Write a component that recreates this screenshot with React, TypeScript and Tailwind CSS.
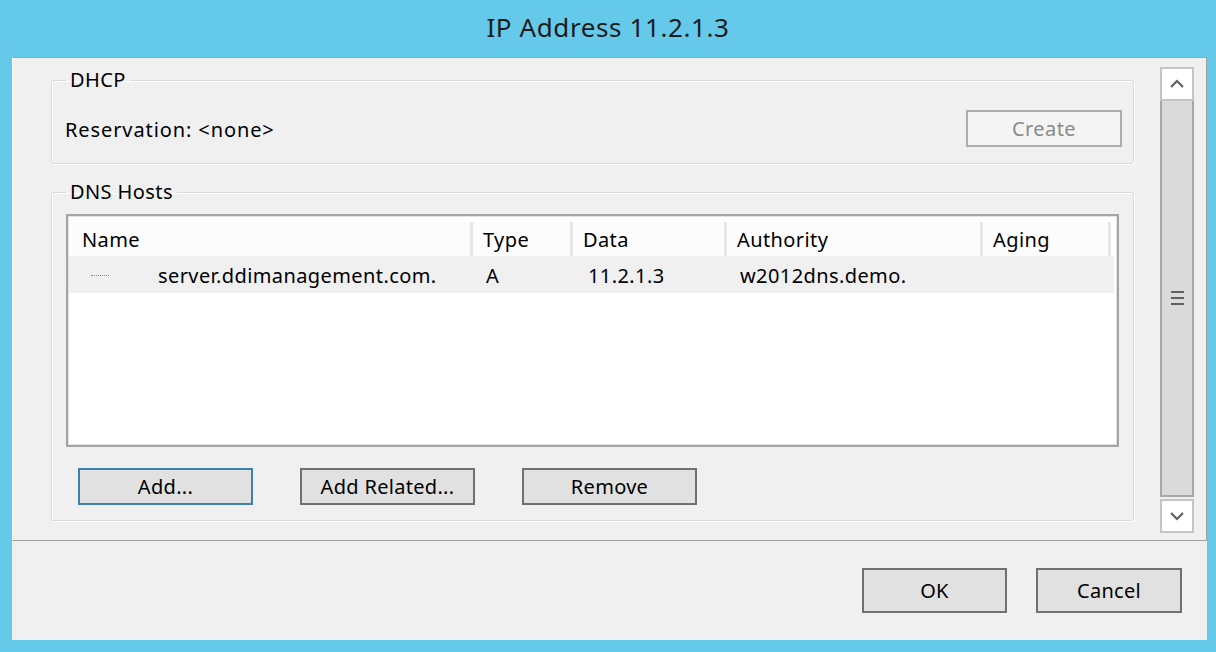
import React from 'react';

const font = { fontFamily: '"Noto Sans", "Open Sans", Arial, sans-serif' };

const columns = [
  { label: 'Name', width: 'w-[401px]' },
  { label: 'Type', width: 'w-[100px]' },
  { label: 'Data', width: 'w-[154px]' },
  { label: 'Authority', width: 'w-[256px]' },
  { label: 'Aging', width: 'w-[128px]' },
];

const WinButton: React.FC<{ label: string; focused?: boolean; className?: string }> = ({
  label,
  focused = false,
  className = '',
}) => (
  <button
    className={
      'flex items-center justify-center pt-[1px] bg-[#e1e1e1] border-2 text-[20px] tracking-[0.3px] text-black ' +
      (focused ? 'border-[#3c7fb1] ' : 'border-[#707070] ') +
      className
    }
  >
    {label}
  </button>
);

const Chevron: React.FC<{ down?: boolean }> = ({ down = false }) => (
  <svg width="16" height="10" viewBox="0 0 16 10" className={down ? 'rotate-180' : ''}>
    <path d="M2 8 L8 2 L14 8" fill="none" stroke="#606060" strokeWidth="2.2" />
  </svg>
);

export default function App() {
  return (
    <div className="w-[1216px] h-[652px] bg-[#65c9ea] flex flex-col overflow-hidden" style={font}>
      {/* Title bar */}
      <div className="h-[57px] shrink-0 flex items-center justify-center text-[26px] tracking-[0.6px] text-[#1b1b1b] pb-[3px]">
        IP Address 11.2.1.3
      </div>

      {/* Window body */}
      <div className="ml-[12px] mr-[9px] mb-[12px] flex-1 bg-[#f0f0f0] flex flex-col">
        {/* Scrollable panel */}
        <div className="h-[484px] shrink-0 flex border-t border-r border-b border-t-[#8fa9b5] border-r-[#a0a0a0] border-b-[#a0a0a0] border-l border-l-white">
          <div className="flex-1 pl-[38px] pt-[10px] flex flex-col gap-[16px] text-[20px] tracking-[0.4px] text-black">
            {/* DHCP */}
            <fieldset className="w-[1083px] border border-[#d5dde3] rounded-[3px] shadow-[inset_1px_1px_0_#fff,1px_1px_0_#fff] pl-[14px] pr-[11px] pb-[16px]">
              <legend className="px-[4px] leading-[24px]">DHCP</legend>
              <div className="mt-[18px] h-[37px] flex items-center justify-between">
                <span className="-ml-[1px] pt-[3px] tracking-[0.9px]">Reservation: &lt;none&gt;</span>
                <button className="w-[156px] h-[37px] flex items-center justify-center pt-[1px] bg-[#f4f4f4] border-2 border-[#adadad] text-[#8a8a8a]">
                  Create
                </button>
              </div>
            </fieldset>

            {/* DNS Hosts */}
            <fieldset className="w-[1083px] border border-[#d5dde3] rounded-[3px] shadow-[inset_1px_1px_0_#fff,1px_1px_0_#fff] pl-[14px] pr-[14px] pb-[15px]">
              <legend className="px-[4px] leading-[24px]">DNS Hosts</legend>
              <div className="mt-[10px] h-[233px] border-2 border-[#a4a4a4] bg-white">
                <div className="h-full border border-[#e3e3e3] pt-[5px] pr-[2px]">
                  {/* Header */}
                  <div className="flex h-[34px] ml-[3px]">
                    {columns.map((c) => (
                      <div
                        key={c.label}
                        className={c.width + ' h-full flex items-center pl-[10px] pt-[2px] bg-[#fcfcfc] border-r-[3px] border-[#e6e6e6]'}
                      >
                        {c.label}
                      </div>
                    ))}
                  </div>
                  {/* Row */}
                  <div className="flex h-[37px] items-center pt-[2px] bg-[#f0f0f0]">
                    <div className="w-[404px] flex items-center">
                      <span className="ml-[22px] w-[18px] border-t border-dotted border-[#8a8a8a]" />
                      <span className="ml-[49px]">server.ddimanagement.com.</span>
                    </div>
                    <div className="w-[100px] pl-[13px]">A</div>
                    <div className="w-[154px] pl-[15px]">11.2.1.3</div>
                    <div className="w-[256px] pl-[13px]">w2012dns.demo.</div>
                    <div className="flex-1" />
                  </div>
                </div>
              </div>
              <div className="mt-[21px] ml-[12px] flex gap-[47px]">
                <WinButton label="Add..." focused className="w-[175px] h-[37px]" />
                <WinButton label="Add Related..." className="w-[175px] h-[37px]" />
                <WinButton label="Remove" className="w-[175px] h-[37px]" />
              </div>
            </fieldset>
          </div>

          {/* Scrollbar */}
          <div className="w-[34px] mt-[9px] mb-[7px] mr-[12px] flex flex-col">
            <div className="h-[34px] shrink-0 bg-white border-2 border-[#c4c4c4] flex items-center justify-center">
              <Chevron />
            </div>
            <div className="flex-1 bg-[#dadada] border-2 border-t-0 border-[#a8a8a8] flex flex-col items-center justify-center gap-[4px] mb-[2px]">
              <span className="w-[13px] h-[2px] bg-[#606060]" />
              <span className="w-[13px] h-[2px] bg-[#606060]" />
              <span className="w-[13px] h-[2px] bg-[#606060]" />
            </div>
            <div className="h-[34px] shrink-0 bg-white border-2 border-[#c4c4c4] flex items-center justify-center">
              <Chevron down />
            </div>
          </div>
        </div>

        {/* Footer */}
        <div className="flex-1 flex items-center justify-end gap-[29px] pr-[25px]">
          <WinButton label="OK" className="w-[145px] h-[45px]" />
          <WinButton label="Cancel" className="w-[146px] h-[45px]" />
        </div>
      </div>
    </div>
  );
}
